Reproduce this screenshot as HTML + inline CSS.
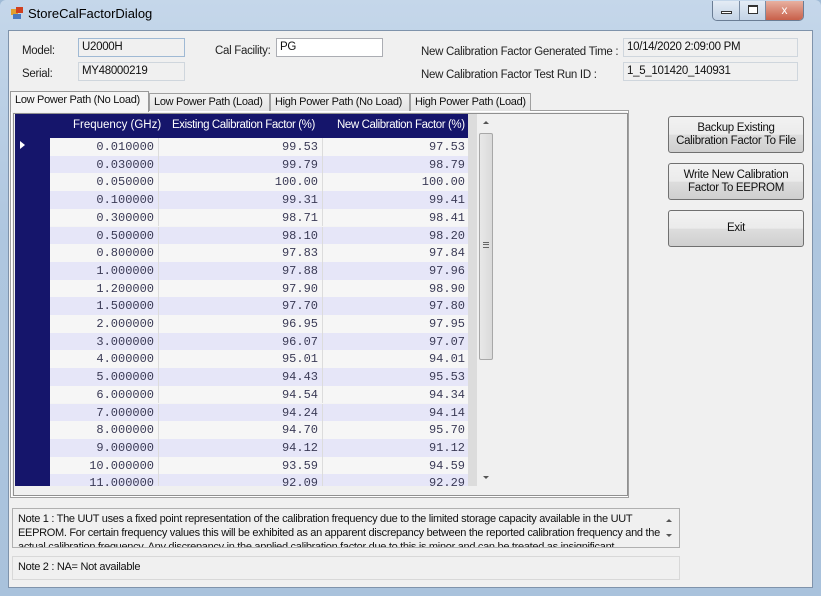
<!DOCTYPE html>
<html><head><meta charset="utf-8"><style>
*{margin:0;padding:0;box-sizing:border-box}
body{width:821px;height:596px;overflow:hidden;background:#9fbad6;font-family:"Liberation Sans",sans-serif;font-size:11px;color:#111;position:relative}
.abs{position:absolute}
.frame{left:0;top:0;width:821px;height:596px;background:linear-gradient(#c5d7ea,#aec6df 40%,#a9c2dc);border-radius:6px 6px 0 0}
.client{left:8px;top:30px;width:805px;height:558px;background:#f0f0f0;border:1px solid #7f93ab}
.lbl{position:absolute;font-size:11.5px;color:#222;letter-spacing:-0.3px;white-space:nowrap}
.box{position:absolute;background:#f0f0f0;border:1px solid #cfd6dd;font-size:11.5px;padding:2px 3px;letter-spacing:-0.3px;white-space:nowrap}
.tab{position:absolute;top:93px;height:18px;border:1px solid #a0a0a0;border-bottom:none;background:linear-gradient(#f3f3f3,#e3e3e3);font-size:11px;padding:2px 4px;letter-spacing:-0.3px;white-space:nowrap;overflow:hidden}
.btn{position:absolute;left:668px;width:136px;border:1px solid #707070;border-radius:3px;background:linear-gradient(#f2f2f2 0%,#ebebeb 50%,#dddddd 51%,#cfcfcf 100%);text-align:center;font-size:11.5px;line-height:13px;letter-spacing:-0.3px}
.grid{position:absolute;left:15px;top:114px;width:453px;height:372px;overflow:hidden;background:#f4f4f4}
.hdr{position:absolute;left:0;top:0;width:453px;height:24px;background:#15156b;color:#fff;font-size:11.5px;white-space:nowrap}
.rh{position:absolute;left:0;top:0;width:35px;height:372px;background:#15156b}
.row{position:absolute;left:35px;width:418px;height:17.7px;font-family:"Liberation Mono",monospace;font-size:12px;color:#3a3a55}
.row span{position:absolute;top:2px;text-align:right}
.c1{left:0;width:104px}.c2{left:108px;width:160px}.c3{left:272px;width:143px}
.row i{position:absolute;top:0;height:100%;width:1px;background:#dcdcdc}
</style></head><body>
<div class="abs frame"></div>
<div class="abs" style="left:11px;top:9px;width:7px;height:6px;background:#e0a030"></div>
<div class="abs" style="left:16px;top:7px;width:7px;height:6px;background:#d04020"></div>
<div class="abs" style="left:13px;top:14px;width:8px;height:5px;background:#4a7ac0"></div>
<div class="abs" style="left:28px;top:6px;font-size:13px;color:#000">StoreCalFactorDialog</div>
<div class="abs" style="left:712px;top:1px;width:92px;height:20px;border:1px solid #6a7d95;border-top:none;border-radius:0 0 5px 5px;overflow:hidden;display:flex">
 <div style="width:27px;background:linear-gradient(#e4ecf5,#c3d3e6);border-right:1px solid #7a8ca3;position:relative"><div style="position:absolute;left:8px;top:10px;width:11px;height:3px;border:1px solid #333;background:#fff"></div></div>
 <div style="width:26px;background:linear-gradient(#e4ecf5,#c3d3e6);border-right:1px solid #7a8ca3;position:relative"><div style="position:absolute;left:8px;top:4px;width:10px;height:9px;border:1px solid #333;border-top-width:2px;background:#fff"></div></div>
 <div style="flex:1;background:linear-gradient(#e8b0a0,#c8604a);color:#fff;text-align:center;font-size:12px;line-height:18px">x</div>
</div>
<div class="abs client"></div>

<div class="lbl" style="left:22px;top:45px">Model:</div>
<div class="lbl" style="left:22px;top:68px">Serial:</div>
<div class="box" style="left:78px;top:38px;width:107px;height:19px;border-color:#9fb9d4">U2000H</div>
<div class="box" style="left:78px;top:62px;width:107px;height:19px">MY48000219</div>
<div class="lbl" style="left:215px;top:45px">Cal Facility:</div>
<div class="box" style="left:276px;top:38px;width:107px;height:19px;background:#fff;border-color:#abadb3">PG</div>
<div class="lbl" style="left:421px;top:46px">New Calibration Factor Generated Time :</div>
<div class="lbl" style="left:421px;top:69px">New Calibration Factor Test Run ID :</div>
<div class="box" style="left:623px;top:38px;width:175px;height:19px">10/14/2020 2:09:00 PM</div>
<div class="box" style="left:623px;top:62px;width:175px;height:19px">1_5_101420_140931</div>

<div class="abs" style="left:10px;top:110px;width:619px;height:388px;border:1px solid #a0a0a0;background:#f0f0f0;box-shadow:inset 0 0 0 1px #fff"></div>
<div class="tab" style="left:10px;top:91px;height:21px;width:139px;background:#f5f5f5;border-color:#999">Low Power Path (No Load)</div>
<div class="tab" style="left:149px;width:121px">Low Power Path (Load)</div>
<div class="tab" style="left:270px;width:140px">High Power Path (No Load)</div>
<div class="tab" style="left:410px;width:121px">High Power Path (Load)</div>

<div class="abs" style="left:13px;top:113px;width:615px;height:383px;border:1px solid #909090;background:#f0f0f0"></div>
<div class="grid">
 <div class="rh"></div>
 <div class="hdr">
  <span class="abs" style="left:58px;top:5px">Frequency (GHz)</span>
  <span class="abs" style="left:157px;top:5px;letter-spacing:-0.4px">Existing Calibration Factor (%)</span>
  <span class="abs" style="left:322px;top:5px;letter-spacing:-0.4px">New Calibration Factor (%)</span>
 </div>
 <div class="abs" style="left:5px;top:27px;width:0;height:0;border-left:5px solid #fff;border-top:4px solid transparent;border-bottom:4px solid transparent"></div>
 <div id="rows"></div>
</div>
<div class="abs" style="left:468px;top:114px;width:9px;height:372px;background:#dcdcdc"></div>
<div class="abs" style="left:477px;top:114px;width:18px;height:372px;background:#f0f0f0"></div>
<div class="abs" style="left:483px;top:121px;width:0;height:0;border-bottom:3px solid #555;border-left:3px solid transparent;border-right:3px solid transparent"></div>
<div class="abs" style="left:479px;top:133px;width:14px;height:227px;border:1px solid #a8a8a8;border-radius:2px;background:linear-gradient(90deg,#e8e8e8,#dadada)"></div>
<div class="abs" style="left:483px;top:242px;width:6px;height:6px;border-top:1px solid #666;border-bottom:1px solid #666"></div>
<div class="abs" style="left:483px;top:244px;width:6px;height:1px;background:#666"></div>
<div class="abs" style="left:483px;top:476px;width:0;height:0;border-top:3px solid #555;border-left:3px solid transparent;border-right:3px solid transparent"></div>

<div class="btn" style="top:116px;height:37px;padding-top:5px">Backup Existing<br>Calibration Factor To File</div>
<div class="btn" style="top:163px;height:37px;padding-top:5px">Write New Calibration<br>Factor To EEPROM</div>
<div class="btn" style="top:210px;height:37px;line-height:35px">Exit</div>

<div class="abs" style="left:12px;top:508px;width:668px;height:40px;border:1px solid #b0b0b0;background:#f0f0f0;overflow:hidden">
 <div style="position:absolute;left:5px;top:3px;width:645px;font-size:11px;line-height:14px;letter-spacing:-0.3px">Note 1 : The UUT uses a fixed point representation of the calibration frequency due to the limited storage capacity available in the UUT EEPROM. For certain frequency values this will be exhibited as an apparent discrepancy between the reported calibration frequency and the actual calibration frequency. Any discrepancy in the applied calibration factor due to this is minor and can be treated as insignificant.</div>
 <div style="position:absolute;left:653px;top:10px;border-bottom:3px solid #555;border-left:3px solid transparent;border-right:3px solid transparent"></div>
 <div style="position:absolute;left:653px;top:25px;border-top:3px solid #555;border-left:3px solid transparent;border-right:3px solid transparent"></div>
</div>
<div class="abs" style="left:12px;top:556px;width:668px;height:24px;border:1px solid #d8d8d8;background:#f0f0f0;padding:4px 5px;font-size:11px;letter-spacing:-0.3px">Note 2 : NA= Not available</div>

<script>
var d=[["0.010000","99.53","97.53"],["0.030000","99.79","98.79"],["0.050000","100.00","100.00"],["0.100000","99.31","99.41"],["0.300000","98.71","98.41"],["0.500000","98.10","98.20"],["0.800000","97.83","97.84"],["1.000000","97.88","97.96"],["1.200000","97.90","98.90"],["1.500000","97.70","97.80"],["2.000000","96.95","97.95"],["3.000000","96.07","97.07"],["4.000000","95.01","94.01"],["5.000000","94.43","95.53"],["6.000000","94.54","94.34"],["7.000000","94.24","94.14"],["8.000000","94.70","95.70"],["9.000000","94.12","91.12"],["10.000000","93.59","94.59"],["11.000000","92.09","92.29"]];
var h="";d.forEach(function(r,i){h+='<div class="row" style="top:'+(24+i*17.7)+'px;background:'+(i%2?'#e6e6f8':'#f6f6f6')+'"><i style="left:108px"></i><i style="left:272px"></i><span class="c1">'+r[0]+'</span><span class="c2">'+r[1]+'</span><span class="c3">'+r[2]+'</span></div>'});
document.getElementById("rows").innerHTML=h;
</script>
</body></html>
